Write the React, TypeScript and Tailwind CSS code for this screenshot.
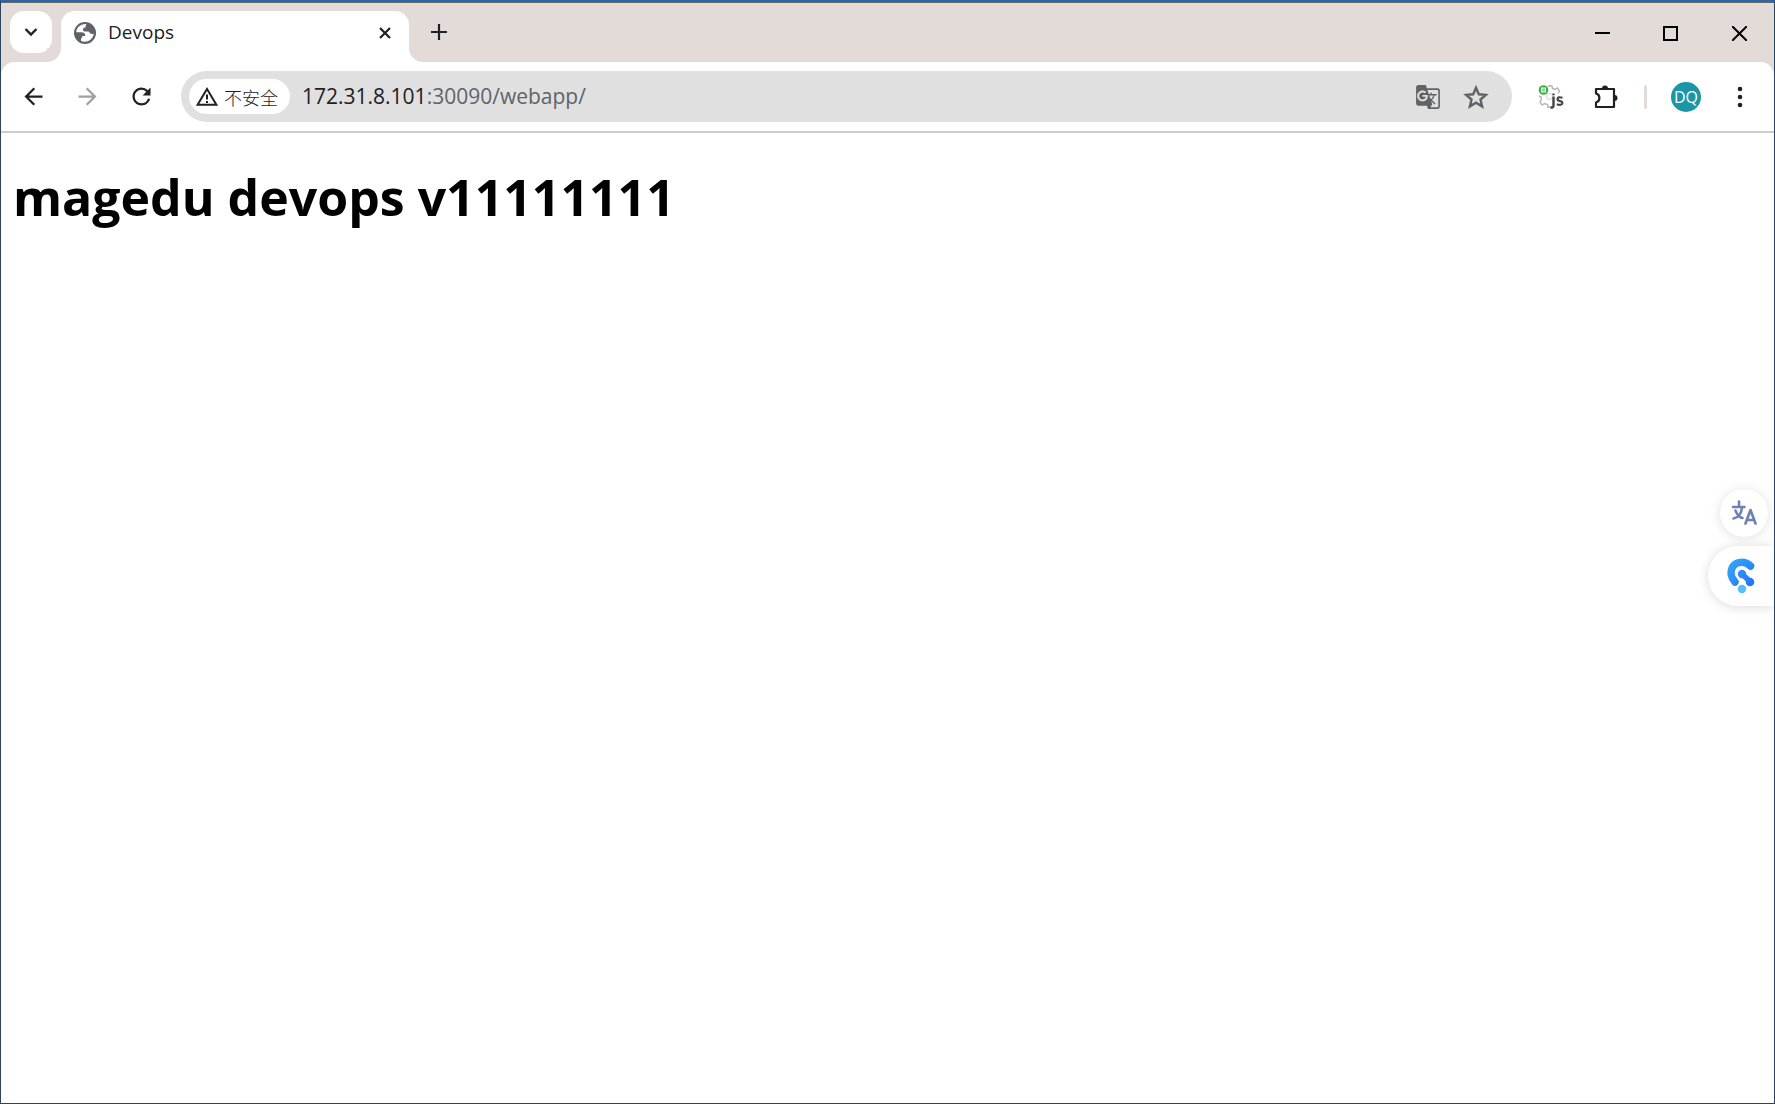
import React from "react";
import { MdArrowBack, MdArrowForward, MdGTranslate, MdRefresh } from "react-icons/md";

const ICON_BUTTON = "flex size-9 shrink-0 items-center justify-center rounded-full";

function Globe() {
  return (
    <svg viewBox="0 0 22 22" className="size-[22px] shrink-0" aria-hidden="true">
      <circle cx="11" cy="11" r="11" fill="#5f6368" />
      <path
        d="M12.500 2.200C7 1.500 2.500 5.500 2.200 10.300H7.500C10 10.300 11.300 11.700 11.300 14H8.200V16H7V19C12.500 21.400 19 18 19.800 11.500C18.800 12.200 17.500 12.300 16.400 11.600C15.400 10.900 15.600 9.600 14.200 9.600H11C9.600 9.600 8.800 8.600 9 7.300C9.200 6 10.400 5.600 11.600 5.600C11.600 4.200 11.600 3 12.500 2.200Z"
        fill="#fff"
      />
    </svg>
  );
}

function WarningIcon() {
  return (
    <svg viewBox="0 0 22 19" className="h-[19px] w-[22px] shrink-0" fill="none" aria-hidden="true">
      <path d="M11 2L20.400 17.800H1.600Z" stroke="#202124" strokeWidth="2" />
      <path d="M11 7.500V12.500M11 14V16" stroke="#202124" strokeWidth="2" />
    </svg>
  );
}

function StarIcon() {
  return (
    <svg viewBox="0 0 26 26" className="size-[26px]" fill="none" aria-hidden="true">
      <path
        d="M13 3.800L15.800 10.300L22.800 10.900L17.500 15.500L19.100 22.400L13 18.700L6.900 22.400L8.500 15.500L3.200 10.900L10.200 10.300Z"
        stroke="#5f6368"
        strokeWidth="2.400"
      />
    </svg>
  );
}

function PuzzleIcon() {
  return (
    <svg viewBox="0 0 26 26" className="size-[26px]" fill="none" aria-hidden="true">
      <path
        d="M3 5H21V23H3V18.500C7.500 17.500 7.500 10.500 3 9.500Z"
        stroke="#202124"
        strokeWidth="2.200"
        strokeLinejoin="round"
      />
      <path d="M9 4.500a3 3 0 0 1 6 0ZM21.500 11v6a3 3 0 0 0 0-6Z" fill="#202124" />
    </svg>
  );
}

function ScriptExtensionIcon() {
  return (
    <svg viewBox="0 0 26 26" className="size-[26px]" fill="none" aria-hidden="true">
      <path
        d="M10 2L14 2L14.500 4.500L17 5.500L19.500 4L21.500 7L20 9.500M14 22.500L10 23.500L9.500 20.500L6.500 19.500L4 21L2 18L3.500 15.500L3 13L1 12"
        stroke="#b4b4b4"
        strokeWidth="1.400"
      />
      <circle cx="11.500" cy="12.500" r="3" stroke="#d0d0d0" strokeWidth="1" />
      <circle cx="5.500" cy="6" r="4.800" fill="#3fae49" />
      <rect x="3.500" y="4" width="4" height="4" fill="#8fd396" stroke="#e8f7ea" />
      <path d="M15.500 12.500V21.500Q15.500 24 12.500 23.500" stroke="#444" strokeWidth="2.400" />
      <path d="M15.500 9.500V11.300" stroke="#444" strokeWidth="2.400" />
      <path
        d="M24.500 13.800Q19.500 12.300 19.500 15Q19.500 16.500 22 17Q24.600 17.600 24.300 19.300Q23.800 21.700 18.800 20.200"
        stroke="#444"
        strokeWidth="2.200"
      />
    </svg>
  );
}

function TranslateGlyph() {
  return (
    <svg
      viewBox="0 0 26 26"
      className="size-[26px]"
      fill="none"
      stroke="#7080b4"
      strokeWidth="2.600"
      strokeLinecap="round"
      strokeLinejoin="round"
      aria-hidden="true"
    >
      <path d="M2 7H13.500M8 1.500V7M4.500 10.500C6 14.500 9 17.500 11.500 18M11 7.500C10.500 13.500 8 17.500 2.500 18.500" />
      <path d="M14.500 23.500L19.500 10L24.500 23.500M16.500 20H22.500" />
    </svg>
  );
}

function AssistantLogo() {
  return (
    <svg viewBox="0 0 28 36" className="h-9 w-7" fill="none" aria-hidden="true">
      <defs>
        <linearGradient id="assistant" x1="0" y1="4" x2="28" y2="28" gradientUnits="userSpaceOnUse">
          <stop stopColor="#35a8f5" />
          <stop offset="1" stopColor="#2470fa" />
        </linearGradient>
      </defs>
      <path
        d="M23.500 8C18 2.500 9 3.500 5.500 9C3 14 4 20 8 24"
        stroke="url(#assistant)"
        strokeWidth="7.500"
        strokeLinecap="round"
      />
      <circle cx="15" cy="16" r="4.200" fill="url(#assistant)" />
      <path d="M15 16L23 23.500" stroke="url(#assistant)" strokeWidth="5.500" />
      <circle cx="23" cy="24" r="4.300" fill="url(#assistant)" />
      <circle cx="15" cy="31" r="4.200" fill="#56bdf6" />
    </svg>
  );
}

function TabStrip() {
  return (
    <header className="flex h-[59px] items-stretch bg-[#e3dbd8] pt-2">
      <button
        aria-label="Search tabs"
        className="ml-[9px] flex size-[42px] shrink-0 items-center justify-center rounded-[14px] bg-white"
      >
        <svg viewBox="0 0 14 10" className="h-2.5 w-3.5" fill="none" aria-hidden="true">
          <path d="M1.500 2L7 7.500L12.500 2" stroke="#202124" strokeWidth="2.400" />
        </svg>
      </button>

      <div className="relative ml-[9px] flex w-[348px] shrink-0 items-center rounded-t-[14px] bg-white pr-3.5 pb-2 pl-[13px]">
        <span className="absolute right-full bottom-0 size-3.5 overflow-hidden bg-white">
          <span className="block size-full rounded-br-[14px] bg-[#e3dbd8]" />
        </span>
        <span className="absolute bottom-0 left-full size-3.5 overflow-hidden bg-white">
          <span className="block size-full rounded-bl-[14px] bg-[#e3dbd8]" />
        </span>
        <Globe />
        <span className="ml-3 flex-1 text-[19px] text-[#202124]">Devops</span>
        <button aria-label="Close tab" className="flex size-5 items-center justify-center">
          <svg viewBox="0 0 12 12" className="size-3" aria-hidden="true">
            <path d="M1 1L11 11M11 1L1 11" stroke="#202124" strokeWidth="2.200" />
          </svg>
        </button>
      </div>

      <button aria-label="New tab" className="mb-[9px] ml-3 flex w-9 items-center justify-center">
        <svg viewBox="0 0 16 16" className="size-4" aria-hidden="true">
          <path d="M8 0V16M0 8H16" stroke="#202124" strokeWidth="2.200" />
        </svg>
      </button>

      <div className="mb-[7px] ml-auto flex text-black">
        <button aria-label="Minimize" className="flex w-[68px] items-center justify-center">
          <span className="h-0.5 w-[15px] bg-black" />
        </button>
        <button aria-label="Maximize" className="flex w-[68px] items-center justify-center">
          <span className="size-[15px] border-2 border-black" />
        </button>
        <button aria-label="Close window" className="flex w-[70px] items-center justify-center">
          <svg viewBox="0 0 15 15" className="size-[15px]" aria-hidden="true">
            <path d="M0 0L15 15M15 0L0 15" stroke="#000" strokeWidth="2" />
          </svg>
        </button>
      </div>
    </header>
  );
}

function AddressBar() {
  return (
    <div className="ml-[22px] flex h-[51px] min-w-0 flex-1 items-center rounded-full bg-[#e0e0e0] pr-3 pl-2">
      <button className="flex h-[35px] shrink-0 items-center gap-1.5 rounded-full bg-white pr-3 pl-[7px] text-lg text-[#202124]">
        <WarningIcon />
        <span className="font-['Noto_Sans_CJK_SC',sans-serif] font-light">不安全</span>
      </button>
      <label className="relative ml-3 flex min-w-0 flex-1 text-[21px] leading-8">
        <span aria-hidden="true" className="pb-0.5 whitespace-pre text-[#5f6368]">
          <span className="text-[#202124]">172.31.8.101</span>:30090/webapp/
        </span>
        <input
          aria-label="Address"
          defaultValue="172.31.8.101:30090/webapp/"
          className="absolute inset-0 w-full bg-transparent text-transparent caret-black outline-none"
        />
      </label>
      <button aria-label="Translate this page" className="flex w-12 items-center justify-center">
        <MdGTranslate className="size-[26px] text-[#5f6368]" />
      </button>
      <button aria-label="Bookmark this page" className="flex w-12 items-center justify-center">
        <StarIcon />
      </button>
    </div>
  );
}

function Toolbar() {
  return (
    <div className="bg-[#e3dbd8]">
      <nav className="flex h-[71px] items-center rounded-t-[14px] border-b-2 border-[#cccccc] bg-white pr-4 pl-3.5">
        <div className="flex gap-[18px] text-[#202124]">
          <button aria-label="Back" className={ICON_BUTTON}>
            <MdArrowBack className="size-[27px]" />
          </button>
          <button aria-label="Forward" className={ICON_BUTTON}>
            <MdArrowForward className="size-[27px] text-[#a0a0a0]" />
          </button>
          <button aria-label="Reload" className={ICON_BUTTON}>
            <MdRefresh className="size-[27px]" />
          </button>
        </div>
        <AddressBar />
        <div className="ml-[21px] flex items-center">
          <button aria-label="Script extension" className={ICON_BUTTON}>
            <ScriptExtensionIcon />
          </button>
          <button aria-label="Extensions" className="ml-[19px] flex size-9 items-center justify-center">
            <PuzzleIcon />
          </button>
          <span className="ml-5 h-6 w-[3px] rounded-full bg-[#e3dbd8]" />
          <button
            aria-label="Profile"
            className="ml-6 flex size-[30px] items-center justify-center rounded-full bg-[#1b96a6] text-base text-white"
          >
            DQ
          </button>
          <button aria-label="Menu" className="ml-[21px] flex size-9 items-center justify-center">
            <svg viewBox="0 0 6 22" className="h-[22px] w-1.5" fill="#202124" aria-hidden="true">
              <circle cx="3" cy="3" r="2.300" />
              <circle cx="3" cy="11" r="2.300" />
              <circle cx="3" cy="19" r="2.300" />
            </svg>
          </button>
        </div>
      </nav>
    </div>
  );
}

export default function App() {
  return (
    <div className="flex min-h-screen flex-col border-x border-t-2 border-b border-x-[#2b4560] border-t-[#2468a8] border-b-[#2b4560] bg-white font-['Open_Sans','Noto_Sans_CJK_SC',sans-serif]">
      <div className="h-px bg-[#6b6460]" />
      <TabStrip />
      <Toolbar />
      <main className="flex-1 px-3 pt-[29px]">
        <h1 className="text-[50px] leading-[70px] font-bold text-black">magedu devops v11111111</h1>
      </main>
      <aside className="fixed top-[489px] right-px flex flex-col items-end gap-[9px]">
        <button
          aria-label="Translate"
          className="mr-1.5 flex size-12 items-center justify-center rounded-full bg-white shadow-[0_1px_12px_rgba(0,0,0,0.13)]"
        >
          <TranslateGlyph />
        </button>
        <button
          aria-label="Assistant"
          className="flex h-[60px] w-[66px] items-center justify-center rounded-l-full bg-white shadow-[0_1px_12px_rgba(0,0,0,0.15)]"
        >
          <AssistantLogo />
        </button>
      </aside>
    </div>
  );
}
